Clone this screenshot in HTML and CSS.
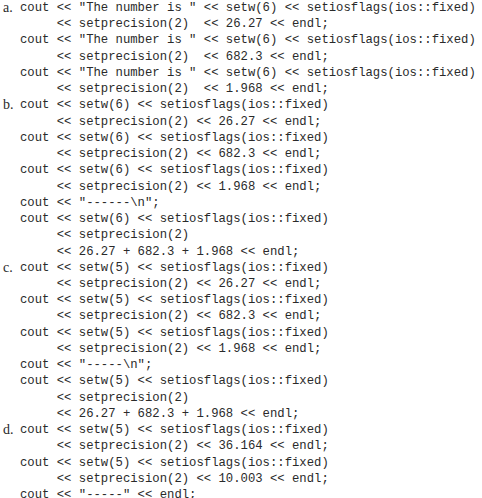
FILE: index.html
```html
<!DOCTYPE html>
<html>
<head>
<meta charset="utf-8">
<link rel="stylesheet" href="styles.css">
</head>
<body>
<div class="list">
  <div class="item">
    <span class="label">a.</span>
    <pre class="code">cout &lt;&lt; "The number is " &lt;&lt; setw(6) &lt;&lt; setiosflags(ios::fixed)
     &lt;&lt; setprecision(2)  &lt;&lt; 26.27 &lt;&lt; endl;
cout &lt;&lt; "The number is " &lt;&lt; setw(6) &lt;&lt; setiosflags(ios::fixed)
     &lt;&lt; setprecision(2)  &lt;&lt; 682.3 &lt;&lt; endl;
cout &lt;&lt; "The number is " &lt;&lt; setw(6) &lt;&lt; setiosflags(ios::fixed)
     &lt;&lt; setprecision(2)  &lt;&lt; 1.968 &lt;&lt; endl;</pre>
  </div>
  <div class="item">
    <span class="label">b.</span>
    <pre class="code">cout &lt;&lt; setw(6) &lt;&lt; setiosflags(ios::fixed)
     &lt;&lt; setprecision(2) &lt;&lt; 26.27 &lt;&lt; endl;
cout &lt;&lt; setw(6) &lt;&lt; setiosflags(ios::fixed)
     &lt;&lt; setprecision(2) &lt;&lt; 682.3 &lt;&lt; endl;
cout &lt;&lt; setw(6) &lt;&lt; setiosflags(ios::fixed)
     &lt;&lt; setprecision(2) &lt;&lt; 1.968 &lt;&lt; endl;
cout &lt;&lt; "------\n";
cout &lt;&lt; setw(6) &lt;&lt; setiosflags(ios::fixed)
     &lt;&lt; setprecision(2)
     &lt;&lt; 26.27 + 682.3 + 1.968 &lt;&lt; endl;</pre>
  </div>
  <div class="item">
    <span class="label">c.</span>
    <pre class="code">cout &lt;&lt; setw(5) &lt;&lt; setiosflags(ios::fixed)
     &lt;&lt; setprecision(2) &lt;&lt; 26.27 &lt;&lt; endl;
cout &lt;&lt; setw(5) &lt;&lt; setiosflags(ios::fixed)
     &lt;&lt; setprecision(2) &lt;&lt; 682.3 &lt;&lt; endl;
cout &lt;&lt; setw(5) &lt;&lt; setiosflags(ios::fixed)
     &lt;&lt; setprecision(2) &lt;&lt; 1.968 &lt;&lt; endl;
cout &lt;&lt; "-----\n";
cout &lt;&lt; setw(5) &lt;&lt; setiosflags(ios::fixed)
     &lt;&lt; setprecision(2)
     &lt;&lt; 26.27 + 682.3 + 1.968 &lt;&lt; endl;</pre>
  </div>
  <div class="item">
    <span class="label">d.</span>
    <pre class="code">cout &lt;&lt; setw(5) &lt;&lt; setiosflags(ios::fixed)
     &lt;&lt; setprecision(2) &lt;&lt; 36.164 &lt;&lt; endl;
cout &lt;&lt; setw(5) &lt;&lt; setiosflags(ios::fixed)
     &lt;&lt; setprecision(2) &lt;&lt; 10.003 &lt;&lt; endl;
cout &lt;&lt; "-----" &lt;&lt; endl;</pre>
  </div>
</div>
</body>
</html>
```

FILE: styles.css
```css
html, body {
  margin: 0;
  padding: 0;
  background: #ffffff;
}
.list {
  padding: 0 0 0 3px;
  display: flex;
  flex-direction: column;
}
.item {
  display: flex;
  align-items: flex-start;
}
.label {
  width: 17px;
  flex: none;
  font-family: "Liberation Serif", serif;
  font-size: 14px;
  line-height: 16.23px;
  color: #2a2a2a;
}
.code {
  margin: 0;
  font-family: "Liberation Mono", monospace;
  font-size: 12.25px;
  line-height: 16.23px;
  color: #2a2a2a;
}
```
